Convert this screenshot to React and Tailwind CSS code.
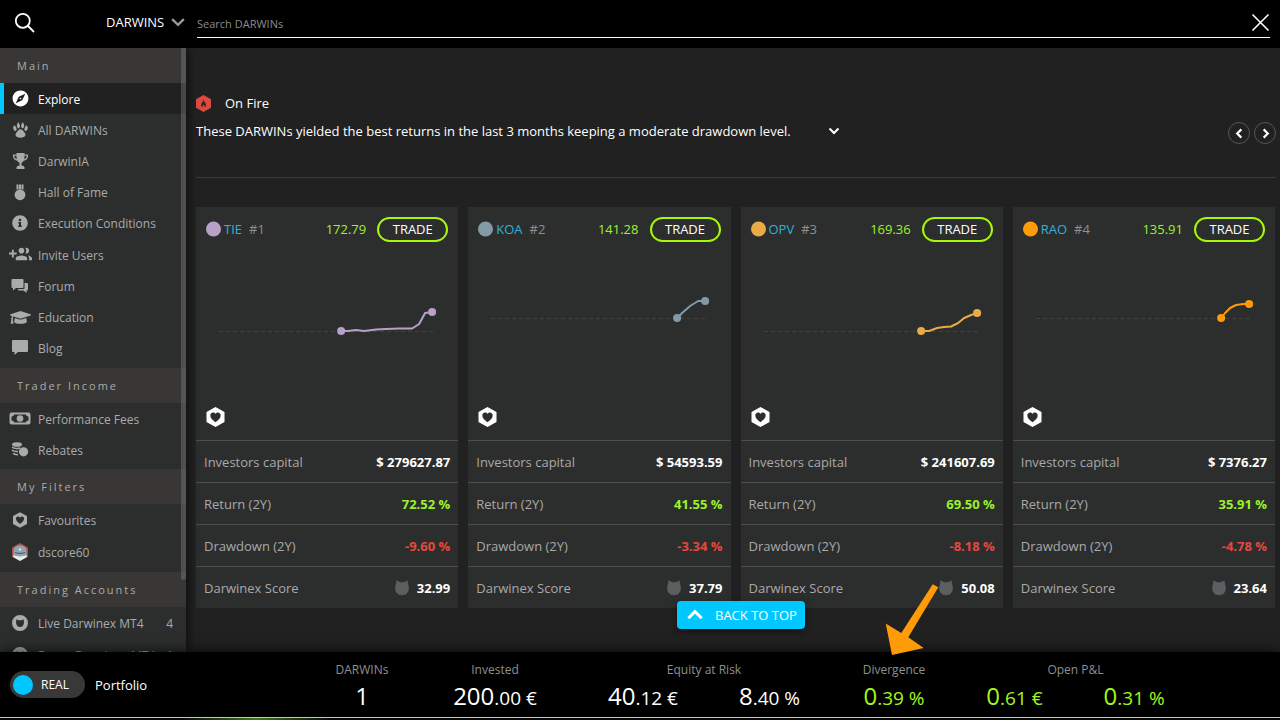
import { FaInfoCircle, FaGraduationCap } from "react-icons/fa";
import { MdExplore } from "react-icons/md";

const Paw = () => (
  <svg viewBox="0 0 15 16" className="h-4 w-[15px]" fill="currentColor">
    <path d="M5.300.2l.9 1.300q1.300 2.300.2 4.200-.9 1-1.900 0-1.300-2-.1-4.200zM9.700.2l-.9 1.300q-1.300 2.300-.2 4.200.9 1 1.900 0 1.300-2 .1-4.200z" />
    <path d="M1.300 3.200l1.200 1.100q1.500 1.800 1 3.900-.7 1.200-1.900.5Q0 7.400.2 5.300zM13.700 3.200l-1.200 1.100q-1.500 1.800-1 3.900.7 1.200 1.900.5Q15 7.400 14.800 5.300z" />
    <path d="M7.500 7.300c2 0 2.500 1.600 3.600 2.700 1.300 1.200 1.600 2.400 1.100 3.700-.6 1.400-2 1.500-3 1.800l-1.700.2-1.700-.2c-1-.3-2.400-.4-3-1.800-.5-1.300-.2-2.500 1.100-3.700 1.100-1.100 1.600-2.700 3.600-2.700z" />
  </svg>
);
const Trophy = () => (
  <svg viewBox="0 0 15 16" className="h-4 w-[15px]" fill="currentColor">
    <path fillRule="evenodd" d="M3.500 0h8v1.500H15v2q-.4 3.600-4.300 4.300-.8 1.500-2.200 2v2.700q2.500.3 3 1.800V16h-8v-1.700q.5-1.500 3-1.800V9.800q-1.400-.5-2.200-2Q.4 7.100 0 3.500v-2h3.500zM1.200 2.800q.1 2.600 2.600 3.500-.4-1.700-.3-3.500zM13.800 2.800h-2.300q.1 1.800-.3 3.500 2.500-.9 2.600-3.500z" />
  </svg>
);
const Medal = () => (
  <svg viewBox="0 0 16 17" className="h-[17px] w-4" fill="currentColor">
    <path d="M4.500.500h2v5h-2zM7 .500h2v5H7zM9.500.500h2v5h-2z" />
    <circle cx="8" cy="10.800" r="5.400" />
  </svg>
);
const GroupAdd = () => (
  <svg viewBox="0 0 24 24" className="h-[23px] w-[23px]" fill="currentColor">
    <path d="M8 10H5V7H3v3H0v2h3v3h2v-3h3v-2zm10 1c1.660 0 2.990-1.340 2.990-3S19.660 5 18 5c-.32 0-.63.05-.91.14.57.81.9 1.790.9 2.860s-.34 2.040-.9 2.860c.28.09.59.14.91.14zm-5 0c1.660 0 2.990-1.340 2.990-3S14.660 5 13 5c-1.660 0-3 1.340-3 3s1.340 3 3 3zm6.620 2.160c.83.73 1.380 1.660 1.380 2.840v2h3v-2c0-1.540-2.370-2.490-4.380-2.840zM13 13c-2 0-6 1-6 3v2h12v-2c0-2-4-3-6-3z" />
  </svg>
);
const Chats = () => (
  <svg viewBox="0 0 18 14" className="h-3.5 w-[18px]" fill="currentColor">
    <path d="M1.500 0h10A1 1 0 0 1 12.500 1v7a1 1 0 0 1-1 1H5L2 11.500V9H1.500a1 1 0 0 1-1-1V1a1 1 0 0 1 1-1z" />
    <path d="M13.500 4H16a1 1 0 0 1 1 1v5.500a1 1 0 0 1-1 1h-.5V14l-3-2.500H8a1 1 0 0 1-1-1V10h5.500a1 1 0 0 0 1-1z" />
  </svg>
);
const Bubble = () => (
  <svg viewBox="0 0 16 17" className="h-[17px] w-4" fill="currentColor">
    <path d="M1 0h14a1 1 0 0 1 1 1v10a1 1 0 0 1-1 1H6l-3.500 3V12H1a1 1 0 0 1-1-1V1a1 1 0 0 1 1-1z" />
  </svg>
);
const Money = () => (
  <svg viewBox="0 0 22 13" className="h-[13px] w-[22px]" fill="currentColor">
    <path fillRule="evenodd" d="M2.500.5h17a2 2 0 0 1 2 2v8a2 2 0 0 1-2 2h-17a2 2 0 0 1-2-2v-8a2 2 0 0 1 2-2zM5 2.500Q5 4.500 2.500 4.500v4Q5 8.500 5 10.500h12q0-2 2.500-2v-4q-2.500 0-2.500-2z" />
    <circle cx="11" cy="6.500" r="3.300" />
  </svg>
);
const Coins = () => (
  <svg viewBox="0 0 18 15" className="h-[15px] w-[18px]" fill="currentColor">
    <ellipse cx="6" cy="2.500" rx="5" ry="2.300" />
    <path d="M1 5.200q3 2.200 8 .8M1 8.200q2.500 1.800 6 1.200M2 11.400q2.200 1.600 5 1.200" fill="none" stroke="currentColor" strokeWidth="1.500" />
    <circle cx="12.500" cy="9.800" r="4.600" />
  </svg>
);
const HexHeart = ({ className }) => (
  <svg viewBox="0 0 18 20" className={className} fill="currentColor">
    <path fillRule="evenodd" d="M9 0l9 5v10l-9 5-9-5V5zM9 15.200c2.600-2 5.200-4.200 5.200-6.800 0-3-3.800-3.900-5.200-1.400C7.600 4.500 3.800 5.400 3.800 8.400c0 2.600 2.600 4.800 5.200 6.800z" />
  </svg>
);
const HexBadge = () => (
  <svg viewBox="0 0 16 18" className="h-[18px] w-4">
    <path d="M8 0l8 4.500v9L8 18l-8-4.500v-9z" fill="#b5503f" />
    <path d="M1.500 8q0-5.500 6.500-5.500T14.500 8v5.500L8 17l-6.500-3.500z" fill="#8fa5b2" />
    <path d="M1 12.500l7 1 7-1v1.500l-7 4-7-4z" fill="#e4ecef" />
    <path d="M3 9.500q5 1.800 10 0" stroke="#43606f" strokeWidth="1.200" fill="none" />
    <circle cx="8" cy="6.500" r="1.200" fill="#dbe6ea" />
  </svg>
);
const CatRing = () => (
  <svg viewBox="0 0 16 16" className="h-4 w-4" fill="currentColor">
    <path fillRule="evenodd" d="M8 0a8 8 0 1 1 0 16A8 8 0 0 1 8 0zM4.300 4.200q-.8 4.300.6 6.200Q6 12 8 12t3.100-1.600q1.400-1.900.6-6.200l-1.900 1H6.200z" />
  </svg>
);
const Cat = () => (
  <svg viewBox="0 0 14 16" className="h-4 w-3.5 text-[#5b5f61]" fill="currentColor" aria-hidden="true">
    <path d="M1.500.3L5 2.200h4L12.500.3 13 4q1 2.500.9 4.500-.2 3.600-2.700 5.200L10.300 15 9 14.600 7 15.400 5 14.600l-1.300.4-.9-1.300Q.3 12.100.1 8.500 0 6.500 1 4z" />
  </svg>
);
const Chevron = ({ d, className, w = 2 }) => (
  <svg viewBox="0 0 12 12" className={className} fill="none" stroke="currentColor" strokeWidth={w}>
    <path d={d} />
  </svg>
);

const sections = [
  {
    title: "Main",
    list: "h-[281px]",
    items: [
      ["Explore", <MdExplore size={19} />],
      ["All DARWINs", <Paw />],
      ["DarwinIA", <Trophy />],
      ["Hall of Fame", <Medal />],
      ["Execution Conditions", <FaInfoCircle size={16} />],
      ["Invite Users", <GroupAdd />],
      ["Forum", <Chats />],
      ["Education", <FaGraduationCap size={21} />],
      ["Blog", <Bubble />],
    ],
  },
  { title: "Trader Income", list: "h-[62px]", items: [["Performance Fees", <Money />], ["Rebates", <Coins />]] },
  { title: "My Filters", list: "h-16", items: [["Favourites", <HexHeart className="h-4 w-3.5" />], ["dscore60", <HexBadge />]] },
  { title: "Trading Accounts", list: "h-16", items: [["Live Darwinex MT4", <CatRing />, 4], ["Demo Darwinex MT4", <CatRing />, 1]] },
];

const cards = [
  { name: "TIE", rank: "#1", quote: "172.79", color: "#b8a0c8", base: 124, pts: [[145, 124], [152, 124], [160, 123], [168, 124], [180, 122.500], [190, 122], [203, 121.500], [216, 121.500], [223, 117], [229, 106], [236, 105]], capital: "$ 279627.87", ret: "72.52 %", dd: "-9.60 %", score: "32.99" },
  { name: "KOA", rank: "#2", quote: "141.28", color: "#829aa7", base: 111, pts: [[209, 111], [214, 106], [222, 99], [230, 94], [237, 94]], capital: "$ 54593.59", ret: "41.55 %", dd: "-3.34 %", score: "37.79" },
  { name: "OPV", rank: "#3", quote: "169.36", color: "#e8ab45", base: 124, pts: [[180, 124], [188, 124], [196, 121], [203, 120], [210, 119.500], [217, 116], [223, 111], [230, 108], [236, 106]], capital: "$ 241607.69", ret: "69.50 %", dd: "-8.18 %", score: "50.08" },
  { name: "RAO", rank: "#4", quote: "135.91", color: "#ff9a08", base: 111, pts: [[208, 111], [212, 106], [217, 101], [223, 98], [230, 97], [236, 97]], capital: "$ 7376.27", ret: "35.91 %", dd: "-4.78 %", score: "23.64" },
];

function Card({ c }) {
  const [first] = c.pts;
  const last = c.pts[c.pts.length - 1];
  return (
    <article className="bg-[#2c2e2e]">
      <header className="flex h-11 items-center px-2.5">
        <svg viewBox="0 0 16 16" className="mr-0.5 h-4 w-4" aria-hidden="true"><circle cx="7.500" cy="8" r="7.500" fill={c.color} /></svg>
        <a href="#" className="text-[#2fb1dc]">{c.name}</a>
        <span className="ml-[7px] text-[#8f8f8f]">{c.rank}</span>
        <span className="ml-auto text-[#9df22a]">{c.quote}</span>
        <button className="ml-[11px] h-[25px] w-[71px] rounded-full border-2 border-[#a6f70a] text-white">TRADE</button>
      </header>
      <svg viewBox="0 44 262 156" className="h-[156px] w-full" fill="none" aria-hidden="true">
        <path d={`M23 ${c.base + 0.5}H238`} stroke="#404242" strokeDasharray="4 3" />
        <polyline points={c.pts.map((p) => p.join(",")).join(" ")} stroke={c.color} strokeWidth="2" strokeLinejoin="round" />
        <circle cx={first[0]} cy={first[1]} r="4" fill={c.color} />
        <circle cx={last[0]} cy={last[1]} r="4" fill={c.color} />
      </svg>
      <div className="h-[33px] pl-2.5 text-white"><HexHeart className="h-5 w-[19px]" /></div>
      <table className="w-full border-separate border-spacing-0 text-white">
        <tbody>
          {[
            ["Investors capital", c.capital, "text-white"],
            ["Return (2Y)", c.ret, "text-[#9df22a]"],
            ["Drawdown (2Y)", c.dd, "text-[#e5493d]"],
            ["Darwinex Score", c.score, "text-white"],
          ].map(([label, value, tone], i) => (
            <tr key={label} className="h-[42px]">
              <th scope="row" className="border-t border-[#4d4f4f] p-0 pl-2 text-left font-normal text-[#a9a9a9]">{label}</th>
              <td className="border-t border-[#4d4f4f] p-0 pr-2">
                <div className={`flex items-center justify-end gap-2 font-bold ${tone}`}>
                  {i === 3 && <Cat />}
                  {value}
                </div>
              </td>
            </tr>
          ))}
        </tbody>
      </table>
    </article>
  );
}

const stats = [
  { label: "DARWINs", values: [["1", ""]], tone: "text-white" },
  { label: "Invested", values: [["200", ".00 €"]], tone: "text-white" },
  { label: "Equity at Risk", values: [["40", ".12 €"], ["8", ".40 %"]], tone: "text-white" },
  { label: "Divergence", values: [["0", ".39 %"]], tone: "text-[#a3f71a]" },
  { label: "Open P&L", values: [["0", ".61 €"], ["0", ".31 %"]], tone: "text-[#a3f71a]" },
];

export default function App() {
  return (
    <div className="relative flex h-screen flex-col overflow-hidden bg-[#212121] font-['Open_Sans','Noto_Sans',sans-serif] text-[13px] leading-[18px]">
      <header className="z-10 flex h-12 shrink-0 items-start bg-black pr-2.5 text-white">
        <button aria-label="Search" className="mt-3 ml-3.5 h-[22px] w-[22px]">
          <svg viewBox="0 0 22 22" fill="none" stroke="currentColor" strokeWidth="1.800"><circle cx="8.800" cy="8.800" r="7" /><path d="M14 14l6 6" /></svg>
        </button>
        <label className="relative mt-[13px] ml-[70px] flex w-[91px] items-center">
          <select aria-label="Search in" className="w-[84px] appearance-none bg-transparent outline-none">
            <option>DARWINS</option>
          </select>
          <Chevron d="M1 3.500l5 5 5-5" className="pointer-events-none absolute right-3 h-3.5 w-3.5 text-[#999]" />
        </label>
        <div className="flex h-[38px] flex-1 items-center border-b border-white pt-2">
          <input aria-label="Search DARWINs" placeholder="Search DARWINs" className="h-5 min-w-0 flex-1 bg-transparent pt-0.5 text-[11px] outline-none placeholder:text-[#8c8c8c]" />
          <button aria-label="Close" className="h-[19px] w-[19px]">
            <svg viewBox="0 0 19 19" stroke="currentColor" strokeWidth="1.600"><path d="M1.500 1.500l16 16M17.500 1.500l-16 16" /></svg>
          </button>
        </div>
      </header>

      <div className="flex min-h-0 flex-1">
        <aside className="relative z-[5] w-[186px] shrink-0 overflow-hidden bg-[#2c2e2e] text-[#a9abab] shadow-[3px_0_8px_rgba(0,0,0,0.5)]">
          <nav>
            {sections.map((s, si) => (
              <section key={s.title} className="pb-1">
                <h2 className="flex h-[35px] items-center bg-[#383735] pl-[17px] text-[11px] tracking-[2px]">{s.title}</h2>
                <ul className={`grid auto-rows-fr ${s.list}`}>
                  {s.items.map(([label, icon, count], i) => {
                    const active = si === 0 && i === 0;
                    return (
                      <li key={label} className={active ? "border-l-4 border-[#00c8ff] bg-[#212121] text-white" : "border-l-4 border-transparent"}>
                        <a href="#" className="flex h-full items-center">
                          <span className="mr-0.5 flex w-8 justify-center">{icon}</span>
                          <span className="flex-1 pt-0.5 text-[12px] whitespace-nowrap">{label}</span>
                          {count && <span className="mr-[13px] pt-0.5 text-[12px]">{count}</span>}
                        </a>
                      </li>
                    );
                  })}
                </ul>
              </section>
            ))}
          </nav>
          <div className="absolute top-0 right-0 h-[532px] w-[5px] rounded-b bg-[#8e8e8e]/35" />
        </aside>

        <main className="relative min-w-0 flex-1 overflow-hidden pr-1 pl-2.5 text-white">
          <section className="flex h-[130px] items-start justify-between border-b border-[#3a3a3a] pt-[46px]">
            <div>
              <h1 className="flex items-center">
                <svg viewBox="0 0 16 18" className="mr-3.5 h-[17px] w-[15px]" aria-hidden="true">
                  <path d="M8 0l8 4.500v9L8 18l-8-4.500v-9z" fill="#df4a40" />
                  <path d="M8 4.500q.2 2 1.600 3.300Q11.300 9.500 10.300 12L9 13q.3-2-1-3-1.200 1-1 3l-1.300-1q-1-2.500.9-4Q8 6.500 8 4.500z" fill="#3a2020" />
                </svg>
                On Fire
              </h1>
              <p className="mt-2.5 flex items-center">
                These DARWINs yielded the best returns in the last 3 months keeping a moderate drawdown level.
                <button aria-label="Expand" className="ml-[37px]"><Chevron d="M1.500 3.500L6 8l4.500-4.500" className="h-3 w-3" /></button>
              </p>
            </div>
            <div className="mt-7 flex gap-1">
              <button aria-label="Previous" className="flex h-[22px] w-[22px] items-center justify-center rounded-full border border-[#555]"><Chevron w={2.4} d="M8 1.500L3.500 6 8 10.500" className="h-[11px] w-[11px]" /></button>
              <button aria-label="Next" className="flex h-[22px] w-[22px] items-center justify-center rounded-full border border-[#555]"><Chevron w={2.4} d="M4 1.500L8.500 6 4 10.500" className="h-[11px] w-[11px]" /></button>
            </div>
          </section>
          <div className="mt-[29px] grid grid-cols-4 gap-2.5 pr-px">
            {cards.map((c) => <Card key={c.name} c={c} />)}
          </div>
          <button className="absolute bottom-[23px] left-[491px] flex h-7 items-center rounded bg-[#00c8ff] pr-2 pl-2.5 text-white shadow-[0_2px_6px_rgba(0,0,0,0.5)]">
            <Chevron w={2.2} d="M1 8.500L6 3.500l5 5" className="mr-3 h-4 w-4" />
            BACK TO TOP
          </button>
        </main>
      </div>

      <footer className="z-10 shrink-0 bg-black text-white shadow-[0_0_14px_rgba(0,0,0,0.8)]">
        <div className="flex h-[65px] items-center pr-[75px] pl-2.5">
          <button className="flex h-[27px] w-[75px] items-center rounded-full bg-[#383838] pl-[3px] text-[12px]">
            <span className="mr-2 h-5 w-5 rounded-full bg-[#00c8ff]" />
            REAL
          </button>
          <span className="ml-2.5">Portfolio</span>
          <dl className="ml-auto grid w-[905px] grid-cols-[124fr_142fr_276fr_104fr_259fr] self-start pt-[9px] text-center">
            {stats.map((s) => (
              <div key={s.label}>
                <dt className="text-[12px] text-[#8f8f8f]">{s.label}</dt>
                <dd className={`flex justify-center gap-[61px] text-[19px] leading-[34px] whitespace-nowrap ${s.tone}`}>
                  {s.values.map(([a, b]) => (
                    <span key={a + b}><span className="text-[24px]">{a}</span>{b}</span>
                  ))}
                </dd>
              </div>
            ))}
          </dl>
        </div>
        <div className="h-[3px] border-t border-[#b9d58f] bg-linear-to-r from-[#050803] from-14% via-[#3c7a10] via-20% to-[#050803] to-26%" />
      </footer>

      <svg viewBox="0 0 54 72" className="absolute bottom-[64px] left-[885px] z-20 h-[72px] w-[54px]" aria-hidden="true">
        <path d="M47.700.3l5.600 3-30 50 15.400 10.700L7 71 .7 39.500l15.600 9.500z" fill="#ff9a08" />
      </svg>
    </div>
  );
}
